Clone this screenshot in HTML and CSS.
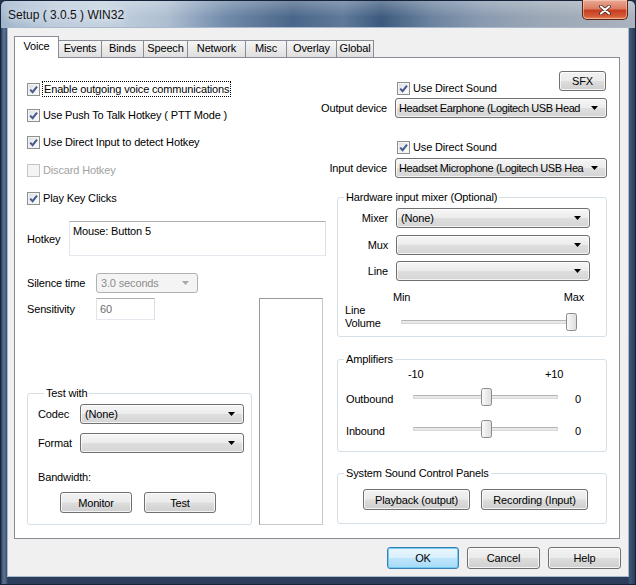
FILE: index.html
```html
<!DOCTYPE html>
<html>
<head>
<meta charset="utf-8">
<link rel="stylesheet" href="styles.css">
</head>
<body>
<div class="window">
  <div class="titlebar">
    <span class="title">Setup ( 3.0.5 ) WIN32</span>
    <div class="close"><svg width="12" height="10" viewBox="0 0 12 10"><path d="M2 1.5 L10 8.5 M10 1.5 L2 8.5" stroke="#3a1a14" stroke-width="3.6" stroke-linecap="round"/><path d="M2 1.5 L10 8.5 M10 1.5 L2 8.5" stroke="#fff" stroke-width="2.2" stroke-linecap="round"/></svg></div>
  </div>
  <div class="client">
    <div class="tabs">
      <div class="tab active t-voice">Voice</div>
      <div class="tab t-events">Events</div>
      <div class="tab t-binds">Binds</div>
      <div class="tab t-speech">Speech</div>
      <div class="tab t-network">Network</div>
      <div class="tab t-misc">Misc</div>
      <div class="tab t-overlay">Overlay</div>
      <div class="tab t-global">Global</div>
    </div>
    <div class="panel">
      <div class="col-left">
        <div class="cbrow r1"><span class="check on"><svg width="11" height="11" viewBox="0 0 11 11"><path d="M2.2 5.6 L4.6 8.2 L9 2.6" fill="none" stroke="#45598c" stroke-width="2"/></svg></span><span class="focus">Enable outgoing voice communications</span></div>
        <div class="cbrow r2"><span class="check on"><svg width="11" height="11" viewBox="0 0 11 11"><path d="M2.2 5.6 L4.6 8.2 L9 2.6" fill="none" stroke="#45598c" stroke-width="2"/></svg></span><span>Use Push To Talk Hotkey ( PTT Mode )</span></div>
        <div class="cbrow r3"><span class="check on"><svg width="11" height="11" viewBox="0 0 11 11"><path d="M2.2 5.6 L4.6 8.2 L9 2.6" fill="none" stroke="#45598c" stroke-width="2"/></svg></span><span>Use Direct Input to detect Hotkey</span></div>
        <div class="cbrow r4 disabled"><span class="check"></span><span>Discard Hotkey</span></div>
        <div class="cbrow r5"><span class="check on"><svg width="11" height="11" viewBox="0 0 11 11"><path d="M2.2 5.6 L4.6 8.2 L9 2.6" fill="none" stroke="#45598c" stroke-width="2"/></svg></span><span>Play Key Clicks</span></div>

        <div class="hotkey">
          <span class="lbl-hotkey">Hotkey</span>
          <div class="textbox big">Mouse: Button 5</div>
        </div>

        <div class="silence">
          <span class="lbl-wide">Silence time</span>
          <div class="combo dis small"><span>3.0 seconds</span><svg class="arrow" width="7" height="4" viewBox="0 0 7 4"><path d="M0 0 H7 L3.5 4 Z" fill="#a8a8a8"/></svg></div>
        </div>

        <div class="lower">
          <div class="sens">
            <span class="lbl-wide">Sensitivity</span>
            <div class="textbox tiny">60</div>
          </div>
          <div class="meter"></div>
          <fieldset class="group test">
            <legend>Test with</legend>
            <div class="trow codec">
              <span class="lbl-test">Codec</span>
              <div class="combo w163"><span>(None)</span><svg class="arrow" width="7" height="4" viewBox="0 0 7 4"><path d="M0 0 H7 L3.5 4 Z" fill="#000"/></svg></div>
            </div>
            <div class="trow format">
              <span class="lbl-test">Format</span>
              <div class="combo w163"><span></span><svg class="arrow" width="7" height="4" viewBox="0 0 7 4"><path d="M0 0 H7 L3.5 4 Z" fill="#000"/></svg></div>
            </div>
            <div class="bandwidth">Bandwidth:</div>
            <div class="testbtns">
              <div class="btn w72">Monitor</div>
              <div class="btn w72">Test</div>
            </div>
          </fieldset>
        </div>
      </div>

      <div class="col-right">
        <div class="rowA">
          <div class="cbrow ds"><span class="check on"><svg width="11" height="11" viewBox="0 0 11 11"><path d="M2.2 5.6 L4.6 8.2 L9 2.6" fill="none" stroke="#45598c" stroke-width="2"/></svg></span><span>Use Direct Sound</span></div>
          <div class="btn sfx">SFX</div>
        </div>
        <div class="devrow out">
          <span class="rlbl">Output device</span>
          <div class="combo w212 dev"><span>Headset Earphone (Logitech USB Head</span><svg class="arrow" width="7" height="4" viewBox="0 0 7 4"><path d="M0 0 H7 L3.5 4 Z" fill="#000"/></svg></div>
        </div>
        <div class="cbrow ds2"><span class="check on"><svg width="11" height="11" viewBox="0 0 11 11"><path d="M2.2 5.6 L4.6 8.2 L9 2.6" fill="none" stroke="#45598c" stroke-width="2"/></svg></span><span>Use Direct Sound</span></div>
        <div class="devrow in">
          <span class="rlbl">Input device</span>
          <div class="combo w212 dev"><span>Headset Microphone (Logitech USB Hea</span><svg class="arrow" width="7" height="4" viewBox="0 0 7 4"><path d="M0 0 H7 L3.5 4 Z" fill="#000"/></svg></div>
        </div>

        <fieldset class="group hw">
          <legend>Hardware input mixer (Optional)</legend>
          <div class="devrow mix">
            <span class="rlbl">Mixer</span>
            <div class="combo w194"><span>(None)</span><svg class="arrow" width="7" height="4" viewBox="0 0 7 4"><path d="M0 0 H7 L3.5 4 Z" fill="#000"/></svg></div>
          </div>
          <div class="devrow mux">
            <span class="rlbl">Mux</span>
            <div class="combo w194"><span></span><svg class="arrow" width="7" height="4" viewBox="0 0 7 4"><path d="M0 0 H7 L3.5 4 Z" fill="#000"/></svg></div>
          </div>
          <div class="devrow line">
            <span class="rlbl">Line</span>
            <div class="combo w194"><span></span><svg class="arrow" width="7" height="4" viewBox="0 0 7 4"><path d="M0 0 H7 L3.5 4 Z" fill="#000"/></svg></div>
          </div>
          <div class="minmax"><span class="min">Min</span><span class="max">Max</span></div>
          <div class="volrow">
            <span class="vollbl">Line<br>Volume</span>
            <div class="slider vol">
              <div class="track"></div>
              <svg class="thumb thumb-max" width="11" height="18" viewBox="0 0 11 18"><defs><linearGradient id="tg1" x1="0" y1="0" x2="1" y2="0"><stop offset="0" stop-color="#fbfbfb"/><stop offset="1" stop-color="#dcdcdc"/></linearGradient></defs><path d="M2.5 0.5 H8.5 Q10.5 0.5 10.5 2.5 V15.5 Q10.5 17.5 8.5 17.5 H2.5 Q0.5 17.5 0.5 15.5 V2.5 Q0.5 0.5 2.5 0.5 Z" fill="url(#tg1)" stroke="#8a8a8a"/></svg>
            </div>
          </div>
        </fieldset>

        <fieldset class="group amp">
          <legend>Amplifiers</legend>
          <div class="scale"><span class="s-min">-10</span><span class="s-max">+10</span></div>
          <div class="amprow outb">
            <span class="amplbl">Outbound</span>
            <div class="slider ampsl">
              <div class="track"></div>
              <svg class="thumb thumb-mid" width="11" height="18" viewBox="0 0 11 18"><defs><linearGradient id="tg2" x1="0" y1="0" x2="1" y2="0"><stop offset="0" stop-color="#fbfbfb"/><stop offset="1" stop-color="#dcdcdc"/></linearGradient></defs><path d="M2.5 0.5 H8.5 Q10.5 0.5 10.5 2.5 V15.5 Q10.5 17.5 8.5 17.5 H2.5 Q0.5 17.5 0.5 15.5 V2.5 Q0.5 0.5 2.5 0.5 Z" fill="url(#tg2)" stroke="#8a8a8a"/></svg>
            </div>
            <span class="ampval">0</span>
          </div>
          <div class="amprow inb">
            <span class="amplbl">Inbound</span>
            <div class="slider ampsl">
              <div class="track"></div>
              <svg class="thumb thumb-mid" width="11" height="18" viewBox="0 0 11 18"><defs><linearGradient id="tg3" x1="0" y1="0" x2="1" y2="0"><stop offset="0" stop-color="#fbfbfb"/><stop offset="1" stop-color="#dcdcdc"/></linearGradient></defs><path d="M2.5 0.5 H8.5 Q10.5 0.5 10.5 2.5 V15.5 Q10.5 17.5 8.5 17.5 H2.5 Q0.5 17.5 0.5 15.5 V2.5 Q0.5 0.5 2.5 0.5 Z" fill="url(#tg3)" stroke="#8a8a8a"/></svg>
            </div>
            <span class="ampval">0</span>
          </div>
        </fieldset>

        <fieldset class="group sys">
          <legend>System Sound Control Panels</legend>
          <div class="sysbtns">
            <div class="btn w107">Playback (output)</div>
            <div class="btn w107">Recording (Input)</div>
          </div>
        </fieldset>
      </div>
    </div>
    <div class="dlg-buttons">
      <div class="btn default w72">OK</div>
      <div class="btn w73">Cancel</div>
      <div class="btn w73">Help</div>
    </div>
  </div>
</div>
</body>
</html>
```

FILE: styles.css
```css
* { box-sizing: border-box; }
html, body { margin: 0; padding: 0; }
body {
  width: 636px; height: 585px; overflow: hidden;
  font: 11px "Liberation Sans", Arial, sans-serif;
  letter-spacing: -0.15px;
  color: #000;
  background: #22344e;
}
.window {
  width: 636px; height: 585px;
  display: flex; flex-direction: column;
  border: 1px solid #15223a;
  border-radius: 6px 6px 0 0;
  background:
    linear-gradient(90deg, #2c3f5c 0px, #5d7595 3px, #3a5070 6px, rgba(0,0,0,0) 7px, rgba(0,0,0,0) 627px, #3f5676 629px, #2a3c57 634px),
    linear-gradient(180deg, #4c6587 0%, #3a5274 60%, #2a3d5a 100%);
}
.titlebar {
  height: 27px; flex: none;
  display: flex; align-items: flex-start;
  padding-left: 7px;
  border-radius: 5px 5px 0 0;
  background:
    linear-gradient(180deg, rgba(255,255,255,0.25) 0%, rgba(255,255,255,0) 60%),
    linear-gradient(90deg, #9fb4cc 0%, #bccbdc 8%, #c4d1df 16%, #aebfd2 26%, #6e88a8 36%, #4a6689 46%, #5e7999 54%, #3d5a7e 60%, #6c84a0 68%, #8a9bb0 76%, #9ca8b6 86%, #aab3be 100%);
}
.title {
  margin-top: 6px;
  font-size: 12px; line-height: 16px;
  letter-spacing: 0;
  color: #111;
  text-shadow: 0 0 6px #e8eef6, 0 0 10px #e8eef6;
}
.close {
  margin-left: auto; margin-right: 7px; margin-top: -1px;
  width: 46px; height: 20px;
  border: 1px solid #5a2418;
  border-top: none;
  border-radius: 0 0 5px 5px;
  background: linear-gradient(180deg, #e9a995 0%, #dc7d63 45%, #c63f22 55%, #d55a37 85%, #e58a5e 100%);
  display: flex; align-items: center; justify-content: center;
  box-shadow: inset 0 0 0 1px rgba(255,220,200,0.5);
}
.client {
  flex: none;
  margin: 0 7px 0 7px;
  height: 548px;
  background: #f0f0f0;
  display: flex; flex-direction: column;
  box-shadow: 0 0 0 1px #a9b8ca;
}
/* tabs */
.tabs {
  display: flex; align-items: flex-end;
  height: 21px;
  margin: 8px 0 0 6px;
  position: relative; z-index: 1;
}
.tab {
  height: 17px;
  border: 1px solid #898c95;
  border-bottom: none;
  margin-right: -1px;
  background: linear-gradient(180deg, #f6f6f6 0%, #eaeaea 50%, #dfdfdf 100%);
  text-align: center;
  line-height: 15px;
  font-size: 11px;
}
.tab.active {
  height: 22px;
  margin-bottom: -1px;
  background: #fff;
  line-height: 19px;
  position: relative; z-index: 2;
}
.t-voice { width: 45px; }
.t-events { width: 44px; }
.t-binds { width: 43px; }
.t-speech { width: 45px; }
.t-network { width: 59px; }
.t-misc { width: 42px; }
.t-overlay { width: 51px; }
.t-global { width: 38px; }

.panel {
  margin-left: 6px;
  width: 606px; height: 482px;
  border: 1px solid #898c95;
  background: #fff;
  display: flex;
  padding: 13px 12px 0 12px;
  gap: 11px;
}
.col-left { width: 299px; flex: none; display: flex; flex-direction: column; }
.col-right { width: 270px; flex: none; display: flex; flex-direction: column; }

/* checkbox */
.cbrow { display: flex; align-items: center; height: 16px; line-height: 14px; }
.check {
  width: 13px; height: 13px; flex: none;
  border: 1px solid #8e8f8f;
  background: linear-gradient(135deg, #d9dde3 0%, #f2f3f5 60%, #fdfdfd 100%);
  box-shadow: inset 0 0 0 1px #f4f4f4;
  margin-right: 3px;
  display: flex; align-items: center; justify-content: center;
}
.disabled { color: #a2a2a2; }
.disabled .check { border-color: #c5c5c5; background: #f4f4f4; box-shadow: none; }
.focus { outline: 1px dotted #000; outline-offset: 0px; padding: 0 1px; }
.r1 { margin-top: 10px; }
.r2 { margin-top: 10px; }
.r3 { margin-top: 11px; }
.r4 { margin-top: 12px; }
.r5 { margin-top: 12px; }

/* text boxes */
.textbox {
  background: #fff;
  border: 1px solid #abadb3;
  border-color: #abadb3 #dbdfe6 #e3e9ef #e2e3ea;
  padding: 2px 3px;
  line-height: 14px;
}
.textbox.big { width: 257px; height: 35px; }
.textbox.tiny { width: 59px; height: 22px; color: #6d6d6d; padding-top: 3px; }

.hotkey { display: flex; align-items: center; margin-top: 15px; }
.lbl-hotkey { width: 42px; flex: none; }

.silence { display: flex; align-items: center; margin-top: 17px; }
.lbl-wide { width: 69px; flex: none; }

/* combo */
.combo {
  height: 20px;
  border: 1px solid #707070;
  border-radius: 3px;
  background: linear-gradient(180deg, #f6f6f6 0%, #ececec 48%, #dedede 52%, #d5d5d5 100%);
  box-shadow: inset 0 0 0 1px rgba(255,255,255,0.7);
  display: flex; align-items: center;
  padding: 0 8px 0 4px;
  line-height: 14px;
  white-space: nowrap; overflow: hidden;
}
.combo span { flex: 1; overflow: hidden; }
.combo .arrow { flex: none; margin-left: 3px; }
.combo.dev { padding-left: 3px; }
.combo.dev span { letter-spacing: -0.4px; }
.combo.dis { border-color: #adb2b5; background: #f4f4f4; color: #8d8d8d; box-shadow: none; }
.combo.small { width: 102px; }
.w163 { width: 164px; }
.w212 { width: 212px; }
.w194 { width: 194px; }

.lower {
  display: grid;
  grid-template-columns: 232px 64px;
  grid-template-rows: auto 1fr;
  margin-top: 5px;
  height: 227px;
}
.sens { display: flex; align-items: center; grid-column: 1; grid-row: 1; }
.meter {
  grid-column: 2; grid-row: 1 / span 2;
  border: 1px solid #9a9a9a;
  border-right-color: #c8c8c8;
  border-bottom-color: #c8c8c8;
  background: #fff;
}

/* group boxes */
.group {
  margin: 0; padding: 0;
  min-width: 0;
  border: 1px solid #d5dfe5;
  border-radius: 3px;
}
.group legend {
  margin-left: 6px;
  padding: 0 2px;
  line-height: 14px;
  height: 14px;
}
.test {
  grid-column: 1; grid-row: 2;
  align-self: end;
  width: 225px;
  padding: 0 0 11px 10px;
}
.trow { display: flex; align-items: center; }
.codec { margin-top: 4px; }
.format { margin-top: 9px; }
.lbl-test { width: 42px; flex: none; }
.bandwidth { margin-top: 17px; line-height: 14px; }
.testbtns { display: flex; gap: 12px; margin-top: 8px; margin-left: 22px; }

/* buttons */
.btn {
  height: 21px;
  border: 1px solid #707070;
  border-radius: 3px;
  background: linear-gradient(180deg, #f2f2f2 0%, #ebebeb 48%, #dddddd 52%, #cfcfcf 100%);
  box-shadow: inset 0 0 0 1px rgba(255,255,255,0.75);
  display: flex; align-items: center; justify-content: center;
  line-height: 14px;
  white-space: nowrap;
}
.w72 { width: 72px; }
.w73 { width: 73px; }
.w107 { width: 107px; }

/* right column */
.rowA { display: flex; align-items: flex-start; }
.ds { margin-left: 60px; margin-top: 9px; }
.sfx { margin-left: auto; margin-right: 1px; width: 47px; height: 20px; }
.devrow { display: flex; align-items: center; }
.rlbl { width: 50px; flex: none; display: flex; justify-content: flex-end; white-space: nowrap; margin-right: 8px; }
.devrow.out { margin-top: 2px; }
.ds2 { margin-left: 60px; margin-top: 21px; }
.devrow.in { margin-top: 3px; }

.hw { margin-top: 12px; padding: 0 0 5px 0; }
.mix { margin-top: 4px; }
.mux { margin-top: 7px; }
.line { margin-top: 6px; }
.minmax { display: flex; margin-top: 10px; line-height: 13px; padding-left: 55px; padding-right: 22px; }
.minmax .max { margin-left: auto; }
.volrow { display: flex; align-items: flex-start; }
.vollbl { width: 63px; padding-left: 7px; line-height: 13px; flex: none; }

.slider { position: relative; height: 18px; flex: none; }
.track {
  position: absolute; left: 0; right: 0; top: 7px;
  height: 4px;
  border: 1px solid #d6d6d6;
  border-top-color: #b4b4b4;
  background: #e7eaea;
  border-radius: 1px;
}
.thumb { position: absolute; top: 0; }
.slider.vol { width: 176px; margin-top: 9px; }
.thumb-max { left: 165px; }
.slider.ampsl { width: 145px; }
.thumb-mid { left: 68px; }

.amp { margin-top: 15px; padding: 0 0 13px 0; }
.scale { display: flex; margin-top: 1px; line-height: 14px; }
.s-min { margin-left: 70px; width: 137px; }
.amprow { display: flex; align-items: center; }
.outb { margin-top: 7px; }
.inb { margin-top: 14px; }
.amplbl { width: 75px; padding-left: 8px; flex: none; padding-top: 4px; }
.ampval { margin-left: 17px; padding-top: 4px; }

.sys { margin-top: 14px; padding: 0 0 13px 0; }
.sysbtns { display: flex; gap: 11px; margin-top: 9px; margin-left: 25px; }

/* dialog buttons */
.dlg-buttons {
  display: flex; justify-content: flex-end; gap: 8px;
  margin-top: 8px; padding-right: 7px;
}
.dlg-buttons .btn { height: 22px; }
.btn.default {
  border-color: #3c7fb1;
  background: linear-gradient(180deg, #eaf6fd 0%, #d9f0fc 48%, #bee6fd 52%, #a7d9f5 100%);
  box-shadow: inset 0 0 0 1px #6fcbf0;
}
```
